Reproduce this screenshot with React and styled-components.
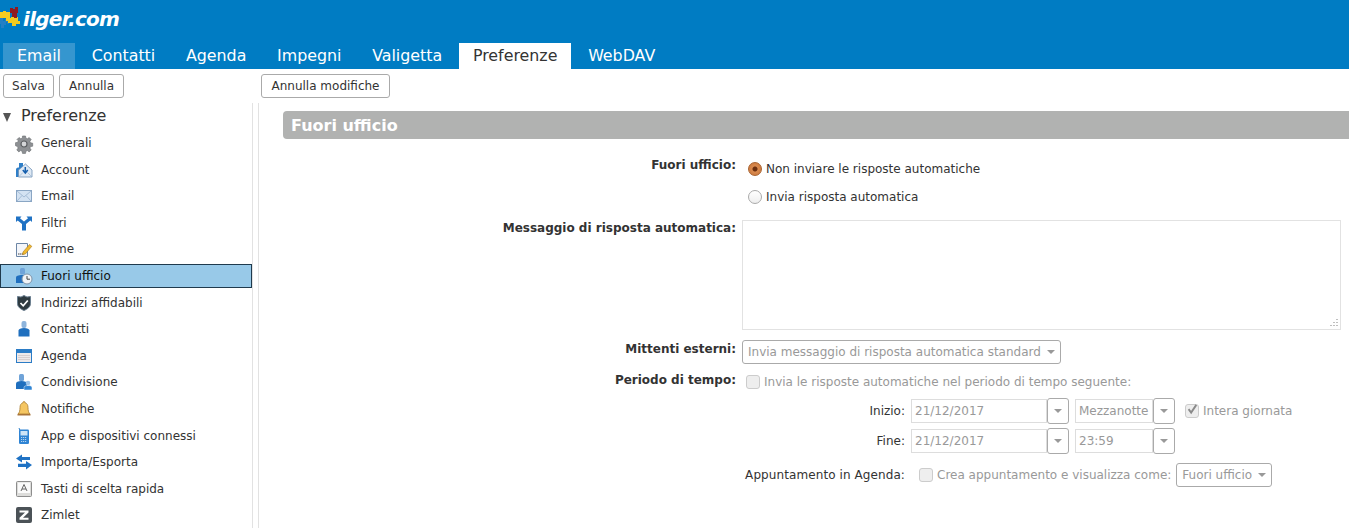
import React from 'react';
import styled, { createGlobalStyle } from 'styled-components';

const GlobalStyle = createGlobalStyle`
  html, body { margin: 0; padding: 0; background: #fff; overflow: hidden; }
  body { font-family: "DejaVu Sans", sans-serif; font-size: 12px; color: #333; }
`;

const Page = styled.div`
  width: 1349px;
  height: 528px;
  overflow: hidden;
  display: flex;
  flex-direction: column;
`;

const Header = styled.header`
  height: 69px;
  flex: none;
  background: #007cc3;
  display: flex;
  flex-direction: column;
`;

const LogoRow = styled.div`
  height: 43px;
  display: flex;
  align-items: flex-start;
  padding-top: 5px;
  box-sizing: border-box;
`;

const LogoText = styled.span`
  font: italic bold 20px/28px "DejaVu Sans", sans-serif;
  color: #fff;
  letter-spacing: -0.72px;
  margin-left: -2px;
`;

const Tabs = styled.nav`
  height: 26px;
  display: flex;
  padding-left: 3px;
  gap: 2.7px;
`;

const Tab = styled.a`
  padding: 0 14px;
  font-size: 15.85px;
  line-height: 26px;
  color: ${p => (p.$active ? '#333' : '#fff')};
  background: ${p => (p.$active ? '#fff' : p.$current ? '#3596cf' : 'transparent')};
`;

const Toolbar = styled.div`
  height: 34px;
  flex: none;
  display: flex;
  align-items: flex-start;
  padding: 5px 0 0 3px;
  box-sizing: border-box;
`;

const ToolGroup = styled.div`
  display: flex;
  gap: 5px;
  width: 258px;
`;

const ToolButton = styled.button`
  height: 24px;
  width: ${p => p.$width}px;
  padding: 0;
  border: 1px solid #aaa;
  border-radius: 3px;
  background: #fff;
  color: #333;
  font: 12px "DejaVu Sans", sans-serif;
`;

const Body = styled.div`
  flex: 1;
  display: flex;
  min-height: 0;
`;

const Sidebar = styled.aside`
  width: 252px;
  flex: none;
`;

const SideTitle = styled.div`
  height: 25px;
  margin-bottom: 3px;
  display: flex;
  align-items: center;
  font-size: 16px;
  padding-left: 3px;
  gap: 10px;
`;

const Triangle = styled.span`
  width: 0;
  height: 0;
  border-left: 4.5px solid transparent;
  border-right: 4.5px solid transparent;
  border-top: 9px solid #555;
  margin-top: 3px;
`;

const SideItem = styled.div`
  height: 24px;
  margin-bottom: 2.6px;
  box-sizing: border-box;
  display: flex;
  align-items: center;
  gap: 9px;
  padding-left: 16px;
  background: ${p => (p.$selected ? '#98c9e8' : 'transparent')};
  border: ${p => (p.$selected ? '1px solid #1f3a4d' : 'none')};
  ${p => p.$selected && 'padding-left: 15px; color: #111; width: 252px;'}
`;

const Sash = styled.div`
  width: 5px;
  flex: none;
  border-left: 1px solid #e2e2e2;
  border-right: 1px solid #e2e2e2;
`;

const Main = styled.main`
  flex: 1;
  min-width: 0;
  padding-top: 8px;
`;

const SectionBar = styled.h2`
  margin: 0 0 0 24px;
  height: 28px;
  background: #b1b2b1;
  border-radius: 4px 0 0 4px;
  color: #fff;
  font: bold 16px/29px "DejaVu Sans", sans-serif;
  padding-left: 8px;
`;

const Form = styled.div`
  display: grid;
  grid-template-columns: 477px 1fr;
  column-gap: 6px;
  padding-top: 16px;
`;

const FieldLabel = styled.div`
  text-align: right;
  font-weight: bold;
  line-height: 20px;
  margin-top: ${p => p.$top || 0}px;
`;

const Field = styled.div`
  display: flex;
  flex-direction: column;
  min-width: 0;
  margin-top: ${p => p.$top || 0}px;
`;

const RadioRow = styled.label`
  height: 28px;
  display: flex;
  align-items: center;
  gap: 4px;
  padding-left: 6px;
`;

const Radio = styled.span`
  width: 14px;
  height: 14px;
  border-radius: 50%;
  box-sizing: border-box;
  border: 1px solid ${p => (p.$on ? '#a8622f' : '#aaa')};
  background: ${p => (p.$on ? 'radial-gradient(circle, #6b2f10 0 2px, #d98a4e 3px, #c8743a 100%)' : 'linear-gradient(#fff, #eee)')};
`;

const MessageBox = styled.div`
  width: 599px;
  height: 110px;
  box-sizing: border-box;
  border: 1px solid #e2e2e2;
  position: relative;
`;

const Grip = styled.svg`
  position: absolute;
  right: 1px;
  bottom: 1px;
`;

const Select = styled.div`
  height: 24px;
  width: ${p => p.$width}px;
  box-sizing: border-box;
  border: 1px solid #aaa;
  border-radius: 3px;
  display: flex;
  align-items: center;
  justify-content: space-between;
  padding: 0 5px;
  color: #999;
  flex: none;
`;

const Caret = styled.span`
  width: 0;
  height: 0;
  border-left: 4px solid transparent;
  border-right: 4px solid transparent;
  border-top: 4px solid #999;
`;

const Faded = styled.span`
  color: #999;
  white-space: nowrap;
  margin: ${p => p.$margin || 0};
`;

const CheckRow = styled.div`
  display: flex;
  align-items: center;
  gap: 4px;
  height: 20px;
  padding-left: ${p => p.$indent || 0}px;
`;

const Check = styled.span`
  width: 14px;
  height: 14px;
  flex: none;
  box-sizing: border-box;
  border: 1px solid #ccc;
  border-radius: 3px;
  background: #eee;
  display: flex;
  align-items: center;
  justify-content: center;
`;

const DateRow = styled.div`
  display: grid;
  grid-template-columns: 169px 136px 22px 6px 78px 22px 10px auto;
  align-items: center;
  height: 26px;
  margin-top: ${p => p.$top || 0}px;
`;

const SmallLabel = styled.div`
  text-align: right;
  padding-right: 6px;
  white-space: nowrap;
  color: #333;
`;

const DateInput = styled.div`
  grid-column: ${p => p.$col};
  height: 24px;
  box-sizing: border-box;
  border: 1px solid #ddd;
  line-height: 22px;
  padding-left: 3px;
  color: #999;
`;

const DropButton = styled.div`
  grid-column: ${p => p.$col};
  height: 26px;
  box-sizing: border-box;
  border: 1px solid #aaa;
  border-radius: 3px;
  display: flex;
  align-items: center;
  justify-content: center;
`;

const AllDay = styled.div`
  grid-column: 8;
  display: flex;
  align-items: center;
  gap: 4px;
`;

const AppointmentRow = styled.div`
  display: flex;
  align-items: center;
  height: 24px;
  margin-top: 9px;
  padding-left: 3px;
`;

const AppointmentLabel = styled.span`
  width: 160px;
  text-align: right;
  margin-right: 14px;
  white-space: nowrap;
  letter-spacing: 0.09px;
`;

const Tick = () => (
  <svg width="14" height="14" viewBox="0 0 14 14" style={{ marginTop: -2 }}>
    <path d="M3 6l3 4 6-9" fill="none" stroke="#8a8a8a" strokeWidth="2.2" />
  </svg>
);

const icons = {
  gear: (
    <g transform="translate(0 1)">
      <path d="M6.500 0h3l.4 2.200 1.500.6L13.200 1.500l2 2-1.300 1.800.6 1.500 2.200.4v3l-2.200.4-.6 1.500 1.300 1.800-2 2-1.800-1.300-1.500.6-.4 2.200h-3l-.4-2.200-1.500-.6-1.800 1.300-2-2 1.300-1.800-.6-1.500L-.5 9.700v-3l2.200-.4.6-1.500L1 3.500l2-2 1.800 1.300 1.500-.6z" fill="#8d9093" stroke="#6a6d70" strokeWidth=".6" />
      <circle cx="8" cy="8" r="3" fill="#d4d6d8" stroke="#5c5f62" strokeWidth="1.200" />
    </g>
  ),
  account: (
    <g>
      <path d="M3 1h4v5H5v9H0V7.500C0 6 1.500 5.500 3 5.500z" fill="#2f7fc8" />
      <path d="M2.500 8L9.500 2 16 8v7H2.500z" fill="#dfe9f4" stroke="#6d8fb5" strokeWidth=".8" />
      <path d="M9.300 5v5M6.800 8l2.500 3 2.500-3" fill="none" stroke="#155fae" strokeWidth="1.500" />
      <path d="M3 14.500l4-4M15.500 14.500l-4-4" stroke="#9db6d0" strokeWidth=".7" />
    </g>
  ),
  mail: (
    <g>
      <rect x="0.500" y="2.500" width="15" height="11" fill="#d3e2f2" stroke="#8aa6c4" />
      <path d="M1 3l7 6 7-6M1 13l5-5.500M15 13l-5-5.500" fill="none" stroke="#a4bcd6" />
    </g>
  ),
  filter: (
    <path d="M0 1.500h5.500L4 3.200 8 6.500l4-3.300-1.500-1.700H16V7l-1.700-1.500L10 9v6.500H6V9L1.700 5.500 0 7z" fill="#1f72c4" />
  ),
  sign: (
    <g>
      <path d="M.5 2.500h11v13H.5z" fill="#f4f6fa" stroke="#6c86a6" />
      <path d="M2 13h6" stroke="#444" strokeDasharray="1.500 .5" />
      <path d="M7 11l6.500-7.500 2.300 1.800L9.300 13l-2.800.6z" fill="#f1b92f" stroke="#a5761a" strokeWidth=".6" />
    </g>
  ),
  away: (
    <g>
      <rect x="4" y="0" width="5" height="6.500" rx="1.500" fill="#6fa3d8" />
      <path d="M0 15V9.500C0 8 2 7 6.500 7S13 8 13 9.500V15z" fill="#1f6fbe" />
      <circle cx="11" cy="11" r="5" fill="#f0f3f6" stroke="#7e94aa" />
      <path d="M11 8v3.200h3" fill="none" stroke="#444" />
    </g>
  ),
  shield: (
    <g>
      <path d="M8 .5l3 1.500 3.500-.5v7c0 3.500-3 5.500-6.500 7-3.500-1.500-6.500-3.500-6.500-7v-7L5 2z" fill="#2e3a40" stroke="#6b7f90" />
      <path d="M4.500 8l2.700 2.800L11.800 5.500" fill="none" stroke="#fff" strokeWidth="1.700" />
    </g>
  ),
  contact: (
    <g>
      <rect x="5.500" y="0" width="5" height="7" rx="2" fill="#8db4dc" />
      <path d="M2.500 15.500V9.500C2.500 8 5 7 8 7s5.500 1 5.500 2.500v6z" fill="#1f6fbe" />
    </g>
  ),
  calendar: (
    <g>
      <rect x="0.500" y="1.500" width="15" height="13" fill="#efeaea" stroke="#2b7cc6" />
      <rect x="1" y="2" width="14" height="3" fill="#2b7cc6" />
      <path d="M2 7.500h12M2 9.500h12M2 11.500h12" stroke="#d8cfcf" />
    </g>
  ),
  share: (
    <g>
      <rect x="3" y="0" width="5" height="7" rx="1.500" fill="#6fa3d8" />
      <path d="M0 15V9.500C0 8 2 7 5.500 7S11 8 11 9.500V15z" fill="#1f6fbe" />
      <circle cx="12" cy="9" r="2.300" fill="#9cc3e8" />
      <path d="M8 16v-2.500C8 12 10 11.500 12 11.500s4 .5 4 2V16z" fill="#2f84d4" stroke="#fff" strokeWidth=".5" />
    </g>
  ),
  bell: (
    <g>
      <path d="M8 0.500c-.8 0-1 .6-1 1.200C5 2.300 4 4 4 6.500c0 3-.5 5-2 6.500h12c-1.500-1.500-2-3.500-2-6.500C12 4 11 2.300 9 1.700 9 1.100 8.800.5 8 .5z" fill="#f5c662" stroke="#a87b2e" strokeWidth=".8" />
      <path d="M1.500 13h13v1.500h-13z" fill="#a9743a" />
    </g>
  ),
  phone: (
    <g>
      <path d="M3 0l1 2.500" stroke="#2f7fc8" />
      <rect x="3" y="1.500" width="10" height="14.500" rx="1.200" fill="#2f84d4" />
      <rect x="4.500" y="3" width="7" height="4.500" fill="#cfe4f6" />
      <path d="M5 9.500h6M5 11.500h6M5 13.500h6" stroke="#b8d4ee" strokeDasharray="1.200 .8" />
    </g>
  ),
  swap: (
    <g>
      <path d="M6 0.500L0 4.500l6 4V6h8V3H6z" fill="#1f72c4" />
      <path d="M10 7l6 4-6 4.500V13H2v-3.200h8z" fill="#1f72c4" />
    </g>
  ),
  key: (
    <g>
      <rect x="0.500" y="0.500" width="15" height="15" rx="1" fill="#dcdcda" stroke="#8d8d8d" />
      <rect x="2" y="1.500" width="12" height="10.500" fill="#fafafa" />
      <path d="M5 10L8 3.500 11 10M6 8h4" fill="none" stroke="#555" strokeWidth=".9" />
    </g>
  ),
  zimlet: (
    <g>
      <rect x="0" y="0" width="16" height="16" rx="2" fill="#4b5257" />
      <path d="M3.500 3.500h9v2L7 10.800h5.500v2h-9v-2L9 5.500H3.500z" fill="#fff" />
    </g>
  ),
};

const ItemIcon = ({ name }) => (
  <svg width="16" height="16" viewBox="0 0 16 16" style={{ flex: 'none', overflow: 'visible' }}>
    {icons[name]}
  </svg>
);

const PuzzleLogo = () => (
  <svg width="25" height="26" viewBox="0 0 25 26" style={{ flex: 'none' }}>
    <path d="M0 13h3v3h2v-2h3v3H6v3H4v3H1v-4H0z" fill="#2a7fc4" opacity="0.8" />
    <path d="M7 17h2v2H7z" fill="#2a7fc4" opacity="0.7" />
    <path d="M0 7h3V6h3v1h4v6H0z" fill="#f3cb1f" />
    <path d="M6 13h5v-1h3V9h2v3h2v4h2v3h-4v2h-4v-3H8v-2H6z" fill="#f3cb1f" />
    <path d="M10 3h3v1h2V2h3v6h-1v5h-3v-1h-2V8h-2z" fill="#8f1a1f" />
  </svg>
);

const tabs = ['Email', 'Contatti', 'Agenda', 'Impegni', 'Valigetta', 'Preferenze', 'WebDAV'];

const items = [
  ['gear', 'Generali'],
  ['account', 'Account'],
  ['mail', 'Email'],
  ['filter', 'Filtri'],
  ['sign', 'Firme'],
  ['away', 'Fuori ufficio'],
  ['shield', 'Indirizzi affidabili'],
  ['contact', 'Contatti'],
  ['calendar', 'Agenda'],
  ['share', 'Condivisione'],
  ['bell', 'Notifiche'],
  ['phone', 'App e dispositivi connessi'],
  ['swap', 'Importa/Esporta'],
  ['key', 'Tasti di scelta rapida'],
  ['zimlet', 'Zimlet'],
];

export default function App() {
  return (
    <Page>
      <GlobalStyle />
      <Header>
        <LogoRow>
          <PuzzleLogo />
          <LogoText>ilger.com</LogoText>
        </LogoRow>
        <Tabs>
          {tabs.map(t => (
            <Tab key={t} $current={t === 'Email'} $active={t === 'Preferenze'}>{t}</Tab>
          ))}
        </Tabs>
      </Header>
      <Toolbar>
        <ToolGroup>
          <ToolButton $width={51}>Salva</ToolButton>
          <ToolButton $width={65}>Annulla</ToolButton>
        </ToolGroup>
        <ToolButton $width={129}>Annulla modifiche</ToolButton>
      </Toolbar>
      <Body>
        <Sidebar>
          <SideTitle><Triangle />Preferenze</SideTitle>
          {items.map(([icon, label]) => (
            <SideItem key={label} $selected={label === 'Fuori ufficio'}>
              <ItemIcon name={icon} />
              {label}
            </SideItem>
          ))}
        </Sidebar>
        <Sash />
        <Main>
          <SectionBar>Fuori ufficio</SectionBar>
          <Form>
            <FieldLabel>Fuori ufficio:</FieldLabel>
            <Field>
              <RadioRow><Radio $on />Non inviare le risposte automatiche</RadioRow>
              <RadioRow><Radio />Invia risposta automatica</RadioRow>
            </Field>
            <FieldLabel $top={7}>Messaggio di risposta automatica:</FieldLabel>
            <Field $top={9}>
              <MessageBox>
                <Grip width="10" height="10" viewBox="0 0 10 10">
                  <path d="M8 1v1M5 4v1M8 4v1M2 7v1M5 7v1M8 7v1" stroke="#aaa" strokeWidth="1.500" />
                </Grip>
              </MessageBox>
            </Field>
            <FieldLabel $top={9}>Mittenti esterni:</FieldLabel>
            <Field $top={10}>
              <Select $width={319}>
                Invia messaggio di risposta automatica standard
                <Caret />
              </Select>
            </Field>
            <FieldLabel $top={6}>Periodo di tempo:</FieldLabel>
            <Field $top={8}>
              <CheckRow $indent={4}>
                <Check />
                <Faded>Invia le risposte automatiche nel periodo di tempo seguente:</Faded>
              </CheckRow>
              <DateRow $top={6}>
                <SmallLabel>Inizio:</SmallLabel>
                <DateInput $col={2}>21/12/2017</DateInput>
                <DropButton $col={3}><Caret /></DropButton>
                <DateInput $col={5}>Mezzanotte</DateInput>
                <DropButton $col={6}><Caret /></DropButton>
                <AllDay>
                  <Check><Tick /></Check>
                  <Faded>Intera giornata</Faded>
                </AllDay>
              </DateRow>
              <DateRow $top={4}>
                <SmallLabel>Fine:</SmallLabel>
                <DateInput $col={2}>21/12/2017</DateInput>
                <DropButton $col={3}><Caret /></DropButton>
                <DateInput $col={5}>23:59</DateInput>
                <DropButton $col={6}><Caret /></DropButton>
              </DateRow>
              <AppointmentRow>
                <AppointmentLabel>Appuntamento in Agenda:</AppointmentLabel>
                <Check />
                <Faded $margin="0 5px 0 4px">Crea appuntamento e visualizza come:</Faded>
                <Select $width={96}>
                  Fuori ufficio
                  <Caret />
                </Select>
              </AppointmentRow>
            </Field>
          </Form>
        </Main>
      </Body>
    </Page>
  );
}
